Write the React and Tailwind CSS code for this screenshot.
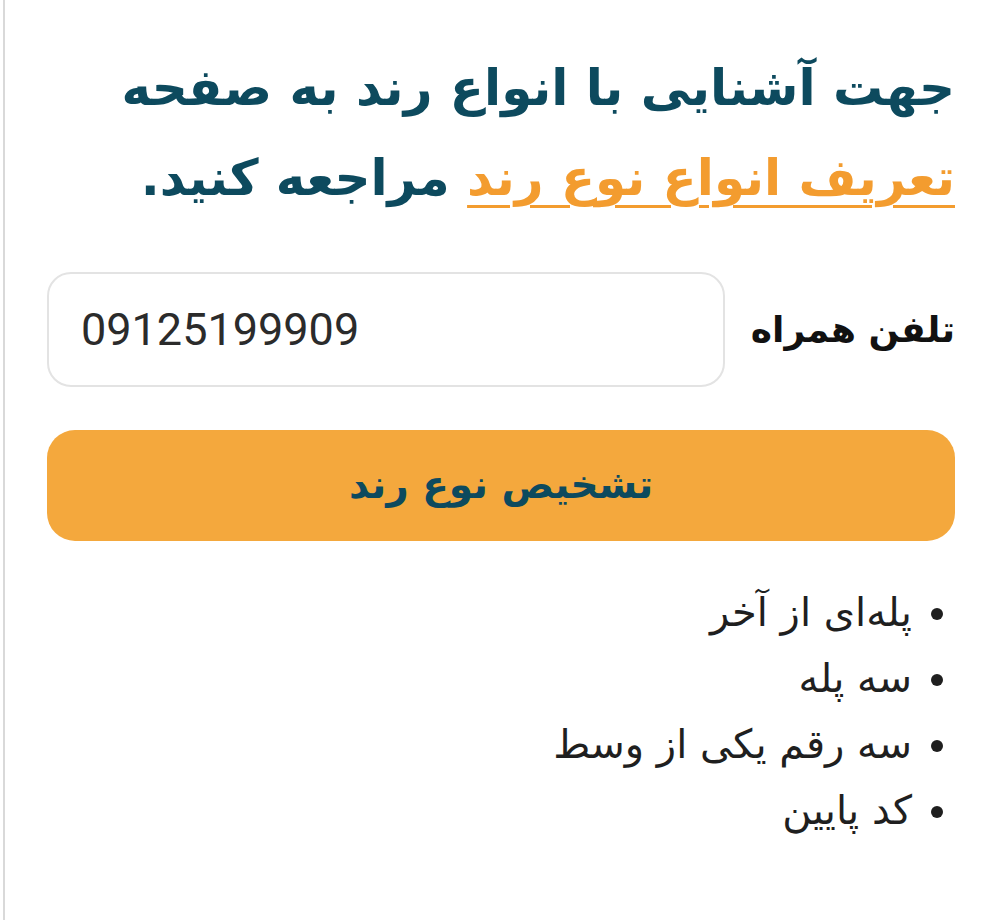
import React, { useState } from "react";

const items = ["پله‌ای از آخر", "سه پله", "سه رقم یکی از وسط", "کد پایین"];

export default function App() {
  const [phone, setPhone] = useState("09125199909");

  return (
    <div className="min-h-screen bg-white pl-[3px]">
      <div
        dir="rtl"
        className="min-h-screen border-l-2 border-[#d9d9d9] pr-[38px] pl-[42px] pt-[43px] font-['DejaVu_Sans',sans-serif]"
      >
        <h2 className="text-[50px] leading-[90px] font-bold text-[#0d4a5e]">
          جهت آشنایی با انواع رند به صفحه
          <br />
          <a href="#" className="text-[#f39c2f] underline underline-offset-[10px] decoration-[3px]">
            تعریف انواع نوع رند
          </a>{" "}
          مراجعه کنید.
        </h2>

        <div className="mt-[49px] flex items-center gap-[26px]">
          <label className="shrink-0 text-[36px] font-bold text-[#111]">تلفن همراه</label>
          <input
            dir="ltr"
            value={phone}
            onChange={(e) => setPhone(e.target.value)}
            className="h-[115px] flex-1 rounded-[24px] border-2 border-[#e3e3e3] px-[32px] text-[45px] text-[#2b2b2b] outline-none font-['Roboto',sans-serif]"
          />
        </div>

        <button className="mt-[43px] flex h-[111px] w-full items-center justify-center rounded-[28px] bg-[#f4a83d] text-[39px] font-bold text-[#0d4a5e]">
          تشخیص نوع رند
        </button>

        <ul className="mt-[38px] list-disc pr-[43px] text-[40px] leading-[66px] text-[#1f1f1f]">
          {items.map((it) => (
            <li key={it}>{it}</li>
          ))}
        </ul>
      </div>
    </div>
  );
}
